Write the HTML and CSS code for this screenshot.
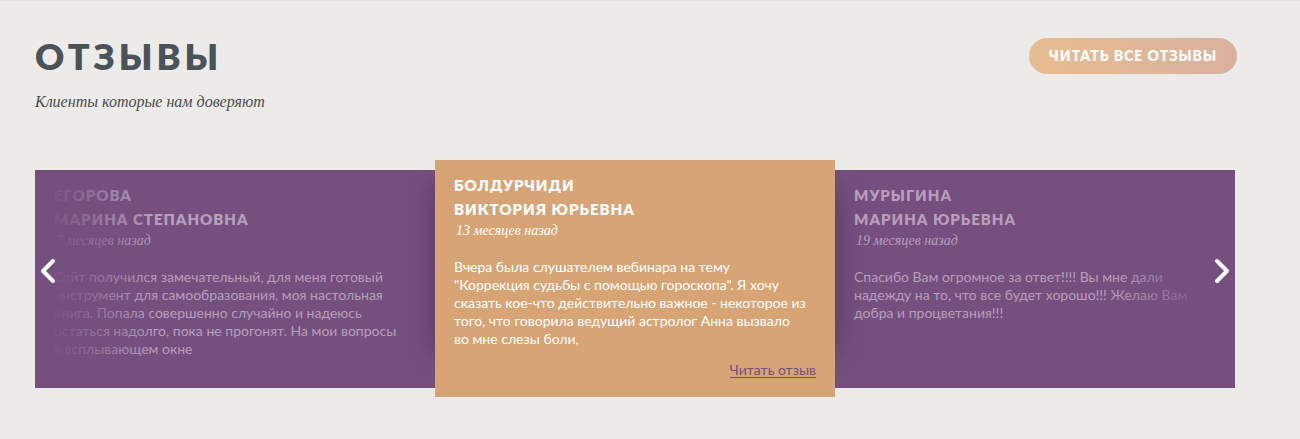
FILE: index.html
```html
<!DOCTYPE html>
<html lang="ru">
<head>
<meta charset="utf-8">
<meta name="viewport" content="width=device-width, initial-scale=1">
<title>Отзывы</title>
<link rel="stylesheet" href="styles.css">
</head>
<body>
<section class="reviews">
  <header class="reviews-head">
    <div>
      <h2 class="reviews-title">Отзывы</h2>
      <p class="reviews-lead">Клиенты которые нам доверяют</p>
    </div>
    <a class="all-link" href="#all">Читать все отзывы</a>
  </header>
  <div class="slider">
    <article class="card">
      <h3 class="name">Егорова<br>Марина Степановна</h3>
      <p class="date">7 месяцев назад</p>
      <p class="text">Сайт получился замечательный, для меня готовый<br>инструмент для самообразования, моя настольная<br>книга. Попала совершенно случайно и надеюсь<br>остаться надолго, пока не прогонят. На мои вопросы<br>в всплывающем окне</p>
    </article>
    <article class="card card-active">
      <h3 class="name">Болдурчиди<br>Виктория Юрьевна</h3>
      <p class="date">13 месяцев назад</p>
      <p class="text">Вчера была слушателем вебинара на тему<br>"Коррекция судьбы с помощью гороскопа". Я хочу<br>сказать кое-что действительно важное - некоторое из<br>того, что говорила ведущий астролог Анна вызвало<br>во мне слезы боли,</p>
      <a class="more" href="#review">Читать отзыв</a>
    </article>
    <article class="card">
      <h3 class="name">Мурыгина<br>Марина Юрьевна</h3>
      <p class="date">19 месяцев назад</p>
      <p class="text">Спасибо Вам огромное за ответ!!!! Вы мне дали<br>надежду на то, что все будет хорошо!!! Желаю Вам<br>добра и процветания!!!</p>
    </article>
    <button class="arrow arrow-prev" type="button" aria-label="Предыдущий отзыв"><svg class="arrow-icon" viewBox="0 0 16 26"><path d="M13 3 3 13l10 10"/></svg></button>
    <button class="arrow arrow-next" type="button" aria-label="Следующий отзыв"><svg class="arrow-icon" viewBox="0 0 16 26"><path d="M3 3l10 10L3 23"/></svg></button>
  </div>
</section>
</body>
</html>
```
FILE: styles.css
```css
* { box-sizing: border-box; }
body {
  margin: 0;
  background: #edebe9;
  font-family: Lato, "Open Sans", sans-serif;
}
h2, h3, p { margin: 0; }
.reviews {
  padding: 34px 65px 42px 35px;
  border-top: 1px solid #e6e4e1;
}
.reviews-head {
  display: flex;
  justify-content: space-between;
  align-items: flex-start;
  margin-right: -2px;
}
.reviews-title {
  color: #4b5258;
  font-size: 36px;
  line-height: 42px;
  font-weight: 800;
  letter-spacing: 4px;
  text-transform: uppercase;
}
.reviews-lead {
  margin-top: 15px;
  color: #4c4c4c;
  font: italic 16px/20px "Liberation Serif", serif;
}
.all-link {
  padding: 0 20px;
  border-radius: 19px;
  margin-top: 3px;
  background: linear-gradient(100deg, #e8bd8f, #d9b19f);
  color: #fff;
  font-size: 14px;
  line-height: 36px;
  font-weight: 800;
  letter-spacing: 1px;
  text-transform: uppercase;
  text-decoration: none;
}
.slider {
  position: relative;
  z-index: 0;
  display: grid;
  grid-template-columns: repeat(3, 1fr);
  align-items: center;
  margin-top: 48px;
}
.card {
  min-height: 218px;
  padding: 13px 19px;
  background: #754f7d;
  color: #b79fbb;
}
.card-active {
  position: relative;
  z-index: 1;
  min-height: 237px;
  background: #d6a475;
  color: #fff;
}
.card-active::before, .card-active::after {
  content: "";
  position: absolute;
  z-index: -1;
  inset: 0;
  background: #d6a475;
}
.card-active::before {
  inset: 26px 0 46px;
  box-shadow: 0 0 24px rgba(50, 20, 60, .4);
}
.name {
  font-size: 15px;
  line-height: 24px;
  font-weight: 800;
  letter-spacing: 1px;
  text-transform: uppercase;
}
.date {
  margin-top: 1px;
  padding-left: 2px;
  font: italic 14px/18px "Liberation Serif", serif;
}
.text {
  margin-top: 18px;
  font-size: 14px;
  line-height: 18px;
  white-space: nowrap;
}
.more {
  display: block;
  width: fit-content;
  margin: 14px 0 0 auto;
  border-bottom: 1px solid #754f7d;
  color: #754f7d;
  font-size: 14px;
  line-height: 15px;
  text-decoration: none;
}
.arrow {
  position: absolute;
  z-index: 2;
  top: 10px;
  bottom: 26px;
  display: flex;
  align-items: center;
  width: 120px;
  padding: 0 5px;
  border: 0;
  cursor: pointer;
}
.arrow-prev { left: 0; background: linear-gradient(to right, #754f7d 10%, #754f7d00); }
.arrow-next { right: 0; justify-content: flex-end; background: linear-gradient(to left, #754f7d 15%, #754f7d00); }
.arrow-icon {
  width: 16px;
  height: 26px;
  fill: none;
  stroke: #fff;
  stroke-width: 4;
  stroke-linecap: round;
  stroke-linejoin: round;
}
```
